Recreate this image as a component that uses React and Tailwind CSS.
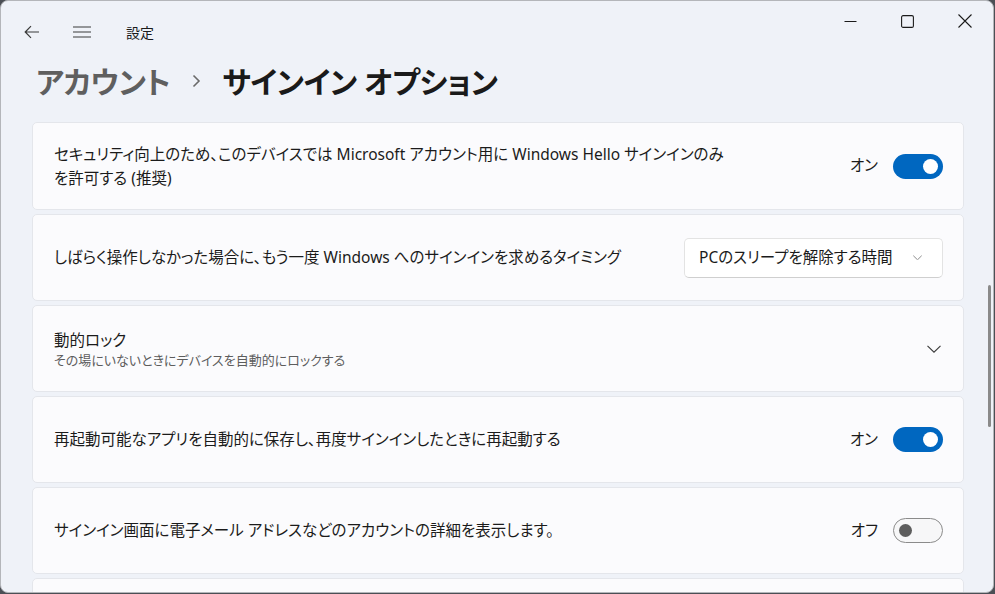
const font = { fontFamily: '"Noto Sans", "Noto Sans CJK JP", sans-serif' };

function Toggle({ on }) {
  if (on) {
    return (
      <div className="w-[50px] h-[25px] rounded-full bg-[#0067c0] flex items-center justify-end pr-[5px]">
        <div className="w-[15px] h-[15px] rounded-full bg-white" />
      </div>
    );
  }
  return (
    <div className="w-[50px] h-[25px] rounded-full bg-[#f7f7f8] border border-[#8b8b8b] flex items-center pl-[5px]">
      <div className="w-[13px] h-[13px] rounded-full bg-[#5d5d5d]" />
    </div>
  );
}

function Card({ children, h = 'h-[87px]' }) {
  return (
    <div className={`${h} shrink-0 rounded-[5px] bg-[#fbfbfd] border border-[#e4e6eb] flex items-center pl-[21px] pr-[20px]`}>
      {children}
    </div>
  );
}

function ToggleRow({ on }) {
  return (
    <div className="ml-auto flex items-center gap-[15px]">
      <span className="text-[15.5px] text-[#1b1b1b]">{on ? 'オン' : 'オフ'}</span>
      <Toggle on={on} />
    </div>
  );
}

function Chevron({ w = 14, color = '#3a3a3a', className = '' }) {
  return (
    <svg className={className} width={w} height={w / 2 + 1} viewBox="0 0 14 8" fill="none" stroke={color} strokeWidth="1.1">
      <path d="M0.5 0.8L7 7.2L13.5 0.8" />
    </svg>
  );
}

export default function App() {
  return (
    <div className="w-[995px] h-[594px] bg-[#4b4f55] overflow-hidden [font-feature-settings:'palt']" style={font}>
      <div className="relative w-[994px] h-[593px] overflow-hidden rounded-[8px] border border-[#b4b6ba] bg-[#eff2f8] flex flex-col">
        {/* title bar */}
        <div className="h-[48px] shrink-0 flex items-start">
          <div className="flex items-center h-[24px] mt-[19px]">
            <svg className="ml-[23px]" width="16" height="14" viewBox="0 0 16 14" fill="none" stroke="#3a3a3a" strokeWidth="1.2">
              <path d="M15 7H1.5M7 1.2L1.2 7L7 12.8" />
            </svg>
            <svg className="ml-[33px]" width="18" height="12" viewBox="0 0 18 12" fill="none" stroke="#3a3a3a" strokeWidth="1.2">
              <path d="M0 1h18M0 6h18M0 11h18" />
            </svg>
            <span className="ml-[35px] text-[14px] text-[#1b1b1b]">設定</span>
          </div>
          <div className="ml-auto flex items-center h-[40px] pr-[21px]">
            <svg width="13" height="13" viewBox="0 0 13 13" fill="none" stroke="#1b1b1b" strokeWidth="1.1">
              <path d="M0.5 6.5H12.5" />
            </svg>
            <svg className="ml-[44px]" width="13" height="13" viewBox="0 0 13 13" fill="none" stroke="#1b1b1b" strokeWidth="1.1">
              <rect x="0.6" y="0.6" width="11.8" height="11.8" rx="1.5" />
            </svg>
            <svg className="ml-[44px]" width="14" height="14" viewBox="0 0 14 14" fill="none" stroke="#1b1b1b" strokeWidth="1.1">
              <path d="M0.5 0.5L13.5 13.5M13.5 0.5L0.5 13.5" />
            </svg>
          </div>
        </div>

        {/* heading */}
        <div className="flex items-center h-[64px] shrink-0 pl-[35px]">
          <span className="text-[30px] font-semibold text-[#5f5f5f] tracking-[-0.5px]">アカウント</span>
          <svg className="ml-[22px] mr-[21px]" width="9" height="14" viewBox="0 0 9 14" fill="none" stroke="#6a6a6a" strokeWidth="1.6">
            <path d="M1.5 1.5L7 7L1.5 12.5" />
          </svg>
          <span className="text-[30px] font-semibold text-[#1a1a1a] tracking-[-0.5px]">サインイン オプション</span>
        </div>

        {/* cards */}
        <div className="flex mt-[9px] shrink-0">
          <div className="ml-[31px] w-[932px] flex flex-col gap-[4px]">
            <Card h="h-[88px]">
              <p className="w-[678px] text-[15.5px] leading-[24px] text-[#1b1b1b]">
                セキュリティ向上のため、このデバイスでは Microsoft アカウント用に Windows Hello サインインのみを許可する (推奨)
              </p>
              <ToggleRow on />
            </Card>
            <Card>
              <p className="text-[15.5px] text-[#1b1b1b]">
                しばらく操作しなかった場合に、もう一度 Windows へのサインインを求めるタイミング
              </p>
              <div className="ml-auto w-[259px] h-[40px] rounded-[5px] bg-white border border-[#e3e3e3] border-b-[#cfcfcf] flex items-center pl-[14px] pr-[20px]">
                <span className="text-[15.5px] text-[#1b1b1b]">PCのスリープを解除する時間</span>
                <Chevron className="ml-auto" w={9} color="#5a5a5a" />
              </div>
            </Card>
            <Card>
              <div className="flex flex-col">
                <span className="text-[15.5px] leading-[22px] text-[#1b1b1b]">動的ロック</span>
                <span className="text-[13px] leading-[18px] text-[#5d5d5d]">その場にいないときにデバイスを自動的にロックする</span>
              </div>
              <Chevron className="ml-auto mr-[2px]" w={14} color="#3a3a3a" />
            </Card>
            <Card>
              <p className="text-[15.5px] text-[#1b1b1b]">
                再起動可能なアプリを自動的に保存し、再度サインインしたときに再起動する
              </p>
              <ToggleRow on />
            </Card>
            <Card>
              <p className="text-[15.5px] text-[#1b1b1b]">
                サインイン画面に電子メール アドレスなどのアカウントの詳細を表示します。
              </p>
              <ToggleRow on={false} />
            </Card>
            <Card />
          </div>
          <div className="ml-[24px] mt-[163px] w-[3px] h-[142px] rounded-full bg-[#8a8a8a]" />
        </div>
      </div>
    </div>
  );
}
